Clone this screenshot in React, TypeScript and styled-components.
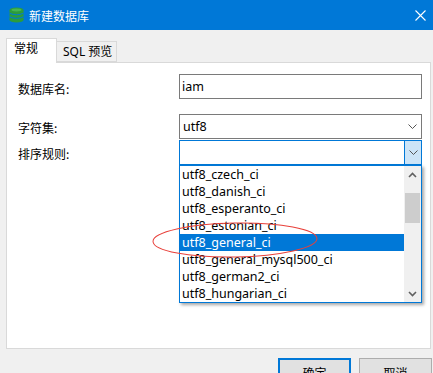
import { createGlobalStyle, styled } from "styled-components";

const GlobalStyle = createGlobalStyle`
    html, body {
        margin: 0;
        padding: 0;
        background: #f0f0f0;
        overflow: hidden;
    }
    body {
        font-family: "Noto Sans", "Noto Sans CJK SC", sans-serif;
        font-size: 12px;
        color: #000;
    }
`;

const collations = [
    "utf8_czech_ci",
    "utf8_danish_ci",
    "utf8_esperanto_ci",
    "utf8_estonian_ci",
    "utf8_general_ci",
    "utf8_general_mysql500_ci",
    "utf8_german2_ci",
    "utf8_hungarian_ci",
];

export default function App() {
    return (
        <Window>
            <GlobalStyle />
            <TitleBar>
                <DbIcon />
                <Title>新建数据库</Title>
                <CloseIcon />
            </TitleBar>
            <Body>
                <Tabs>
                    <Tab $active>常规</Tab>
                    <Tab>SQL 预览</Tab>
                </Tabs>
                <Panel>
                    <Form>
                        <Label>数据库名:</Label>
                        <TextBox>iam</TextBox>
                        <Label $gapTop>字符集:</Label>
                        <Select $gapTop>
                            utf8
                            <Chevron />
                        </Select>
                        <Label>排序规则:</Label>
                        <Select $focused>
                            <DropButton>
                                <Chevron />
                            </DropButton>
                        </Select>
                    </Form>
                    <DropList>
                        <Options>
                            {collations.map((c) => (
                                <Option key={c} $selected={c === "utf8_general_ci"}>
                                    {c}
                                </Option>
                            ))}
                        </Options>
                        <ScrollBar>
                            <ScrollArrow>
                                <svg width="9" height="6" viewBox="0 0 9 6">
                                    <path d="M1 5 L4.5 1.5 L8 5" fill="none" stroke="#606060" strokeWidth="1.6" />
                                </svg>
                            </ScrollArrow>
                            <Track>
                                <Thumb />
                            </Track>
                            <ScrollArrow>
                                <svg width="9" height="6" viewBox="0 0 9 6">
                                    <path d="M1 1 L4.5 4.5 L8 1" fill="none" stroke="#606060" strokeWidth="1.6" />
                                </svg>
                            </ScrollArrow>
                        </ScrollBar>
                    </DropList>
                    <Mark viewBox="0 0 180 44" width="180" height="44">
                        <ellipse cx="84" cy="22" rx="82" ry="17" fill="none" stroke="#e8403a" strokeWidth="1" transform="rotate(-1 84 22)" />
                    </Mark>
                </Panel>
                <Footer>
                    <Button $primary>确定</Button>
                    <Button>取消</Button>
                </Footer>
            </Body>
        </Window>
    );
}

function DbIcon() {
    return (
        <svg width="15" height="16" viewBox="0 0 15 16">
            <ellipse cx="7.5" cy="3" rx="7" ry="2.6" fill="#2c9c3b" />
            <rect x="0.5" y="3" width="14" height="10" fill="#2c9c3b" />
            <ellipse cx="7.5" cy="13" rx="7" ry="2.6" fill="#2c9c3b" />
            <path d="M0.5 6.2 Q7.5 9.4 14.5 6.2" fill="none" stroke="#0078d7" strokeWidth="1" />
            <path d="M0.5 9.8 Q7.5 13 14.5 9.8" fill="none" stroke="#0078d7" strokeWidth="1" />
            <ellipse cx="7.5" cy="3" rx="5" ry="1.4" fill="#46b552" />
        </svg>
    );
}

function CloseIcon() {
    return (
        <CloseBox>
            <svg width="11" height="11" viewBox="0 0 11 11">
                <path d="M0.5 0.5 L10.5 10.5 M10.5 0.5 L0.5 10.5" stroke="#fff" strokeWidth="1.1" />
            </svg>
        </CloseBox>
    );
}

function Chevron() {
    return (
        <ChevronSvg width="9" height="5" viewBox="0 0 9 5">
            <path d="M0.5 0.5 L4.5 4.5 L8.5 0.5" fill="none" stroke="#555" strokeWidth="1" />
        </ChevronSvg>
    );
}

const Window = styled.div`
    width: 433px;
    height: 373px;
    background: #f0f0f0;
    overflow: hidden;
`;

const TitleBar = styled.div`
    height: 30px;
    background: #0078d7;
    display: flex;
    align-items: center;
    padding-left: 9px;
    box-sizing: border-box;
    svg {
        flex: none;
    }
`;

const Title = styled.div`
    color: #fff;
    font-family: "Noto Sans CJK SC", sans-serif;
    font-size: 12px;
    margin-left: 5px;
    flex: 1;
`;

const CloseBox = styled.div`
    width: 30px;
    display: flex;
    justify-content: center;
    margin-right: -2px;
    padding-top: 1px;
`;

const Body = styled.div`
    padding: 8px 0 0 6px;
`;

const Tabs = styled.div`
    display: flex;
    align-items: flex-end;
    height: 24px;
    position: relative;
    z-index: 1;
`;

const Tab = styled.div<{ $active?: boolean }>`
    box-sizing: border-box;
    height: ${({ $active }) => ($active ? "25px" : "21px")};
    margin-bottom: ${({ $active }) => ($active ? "-1px" : "0")};
    padding: ${({ $active }) => ($active ? "2px 6px 0 7px" : "2px 5px 0 6px")};
    border: 1px solid #d9d9d9;
    border-bottom: ${({ $active }) => ($active ? "none" : "1px solid #d9d9d9")};
    border-left: ${({ $active }) => ($active ? "1px solid #d9d9d9" : "none")};
    background: ${({ $active }) => ($active ? "#fff" : "#f0f0f0")};
    width: ${({ $active }) => ($active ? "51px" : "60px")};
    font-family: "Noto Sans", "Noto Sans CJK SC", sans-serif;
    font-size: 12px;
    line-height: 16px;
    white-space: nowrap;
`;

const Panel = styled.div`
    position: relative;
    box-sizing: border-box;
    width: 425px;
    height: 287px;
    background: #fff;
    border: 1px solid #d9d9d9;
    padding: 11px 9px 0 11px;
`;

const Form = styled.div`
    display: grid;
    grid-template-columns: 161px 243px;
    align-items: center;
`;

const Label = styled.div<{ $gapTop?: boolean }>`
    font-family: "Noto Sans CJK SC", sans-serif;
    font-size: 12px;
    margin-top: ${({ $gapTop }) => ($gapTop ? "15px" : "1px")};
    padding-top: 2px;
`;

const TextBox = styled.div`
    box-sizing: border-box;
    height: 25px;
    border: 1px solid #7a7a7a;
    padding: 0 2px;
    display: flex;
    align-items: center;
    font-size: 12.5px;
`;

const Select = styled.div<{ $gapTop?: boolean; $focused?: boolean }>`
    box-sizing: border-box;
    height: 25px;
    margin-top: ${({ $gapTop }) => ($gapTop ? "15px" : "1px")};
    border: 1px solid ${({ $focused }) => ($focused ? "#0078d7" : "#7a7a7a")};
    padding-left: 3px;
    display: flex;
    align-items: center;
    justify-content: space-between;
    font-size: 12.5px;
    > svg {
        margin-right: 4px;
    }
`;

const DropButton = styled.div`
    margin-left: auto;
    box-sizing: border-box;
    width: 17px;
    height: 23px;
    background: #cce4f7;
    border-left: 1px solid #0078d7;
    display: flex;
    align-items: center;
    justify-content: center;
`;

const ChevronSvg = styled.svg`
    flex: none;
`;

const DropList = styled.div`
    position: absolute;
    left: 172px;
    top: 102px;
    box-sizing: border-box;
    width: 243px;
    height: 138px;
    border: 1px solid #0078d7;
    background: #fff;
    display: flex;
    box-shadow: 2px 2px 3px rgba(0, 0, 0, 0.35);
    z-index: 2;
`;

const Options = styled.div`
    flex: 1;
    display: flex;
    flex-direction: column;
`;

const Option = styled.div<{ $selected?: boolean }>`
    height: 17px;
    line-height: 17px;
    padding-left: 2px;
    font-size: 12.5px;
    white-space: nowrap;
    background: ${({ $selected }) => ($selected ? "#0078d7" : "transparent")};
    color: ${({ $selected }) => ($selected ? "#fff" : "#000")};
`;

const ScrollBar = styled.div`
    width: 17px;
    background: #f0f0f0;
    display: flex;
    flex-direction: column;
`;

const ScrollArrow = styled.div`
    height: 17px;
    display: flex;
    align-items: center;
    justify-content: center;
`;

const Track = styled.div`
    flex: 1;
    padding-top: 10px;
`;

const Thumb = styled.div`
    width: 15px;
    margin-left: 1px;
    height: 30px;
    background: #cdcdcd;
`;

const Mark = styled.svg`
    position: absolute;
    left: 144px;
    top: 155px;
    z-index: 3;
    pointer-events: none;
`;

const Footer = styled.div`
    display: flex;
    justify-content: flex-end;
    gap: 8px;
    margin-top: 9px;
    padding-right: 1px;
`;

const Button = styled.div<{ $primary?: boolean }>`
    box-sizing: border-box;
    width: 73px;
    height: 24px;
    border: ${({ $primary }) => ($primary ? "2px solid #0078d7" : "1px solid #adadad")};
    background: #e1e1e1;
    display: flex;
    align-items: center;
    justify-content: center;
    font-family: "Noto Sans CJK SC", sans-serif;
    font-size: 12px;
    padding-top: 4px;
`;
